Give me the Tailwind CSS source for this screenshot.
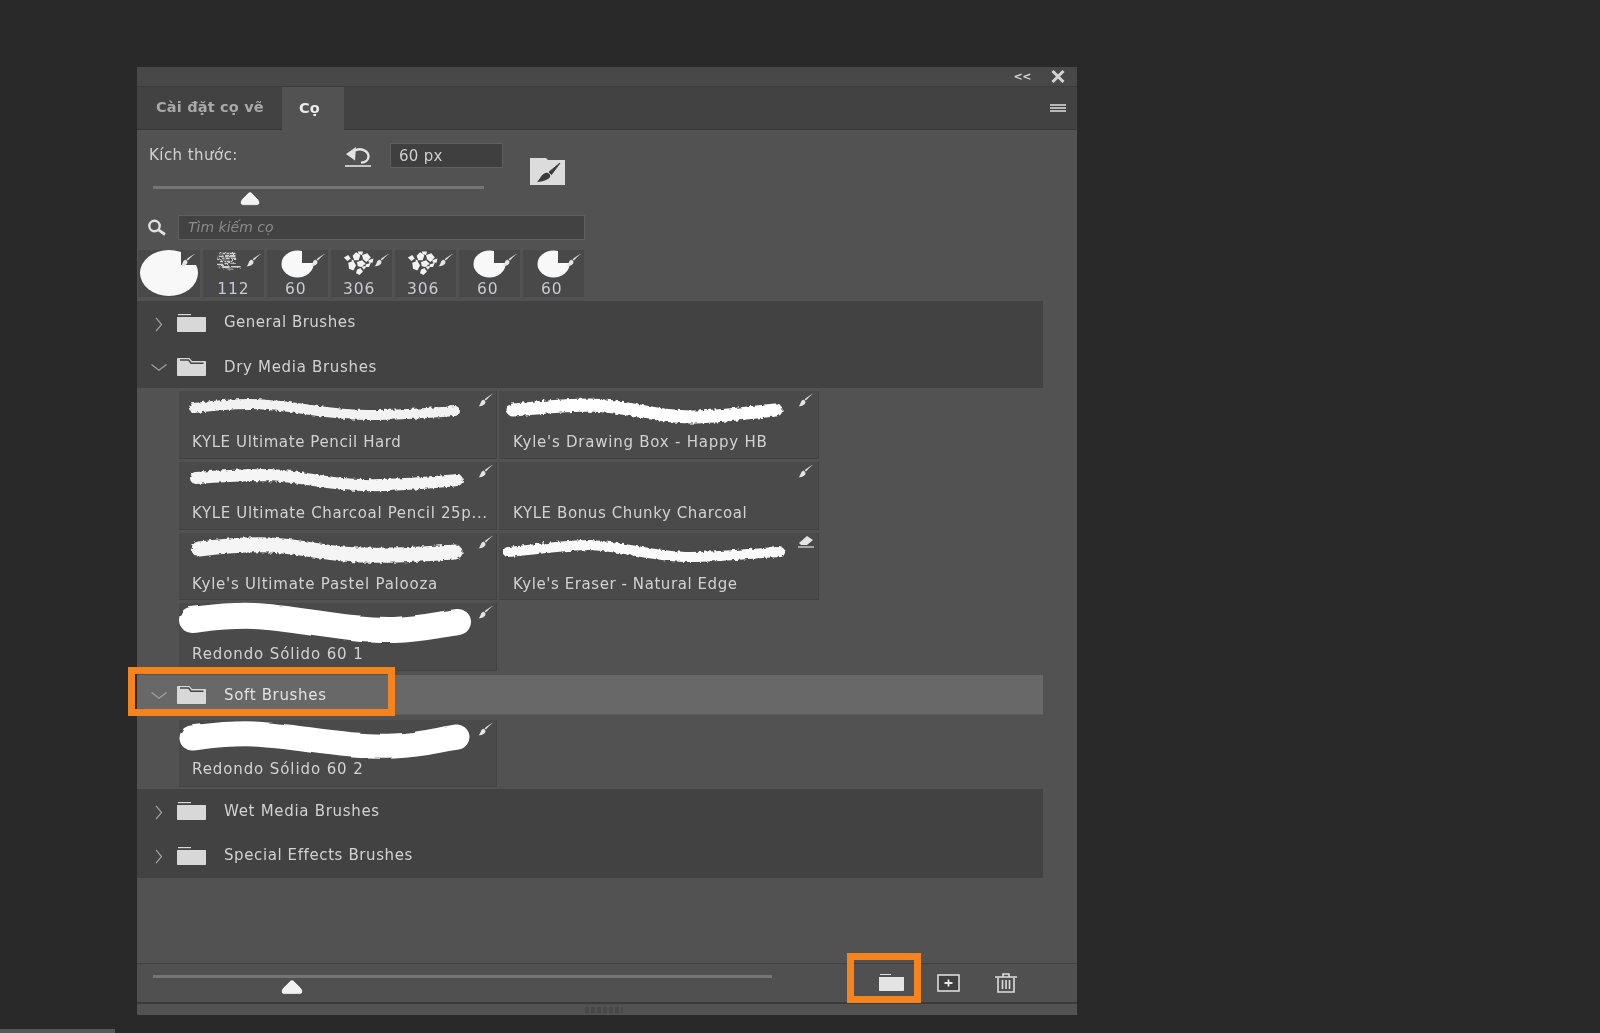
<!DOCTYPE html>
<html lang="vi">
<head>
<meta charset="utf-8">
<title>Cọ</title>
<script src="https://cdn.jsdelivr.net/npm/@tailwindcss/browser@4"></script>
</head>
<body class="bg-[#292929] overflow-hidden">
<svg width="0" height="0" class="absolute">
  <defs>
    <filter id="rough" filterUnits="userSpaceOnUse" x="-20" y="-30" width="360" height="110"><feTurbulence type="fractalNoise" baseFrequency="0.3" numOctaves="2" seed="4"/><feDisplacementMap in="SourceGraphic" scale="4"/></filter>
    <filter id="soft" filterUnits="userSpaceOnUse" x="-20" y="-30" width="360" height="110"><feTurbulence type="fractalNoise" baseFrequency="0.04" numOctaves="2" seed="7"/><feDisplacementMap in="SourceGraphic" scale="3"/></filter>
    <filter id="speck" x="-5%" y="-5%" width="110%" height="110%"><feTurbulence type="fractalNoise" baseFrequency="0.5" numOctaves="2" seed="9"/><feDisplacementMap in="SourceGraphic" scale="4"/></filter>
    <symbol id="brush" viewBox="0 0 17 15"><path d="M16.5 .5C13 3 10.5 5.5 8.5 8L7 6.8C9.5 4.5 13 2 16.5 .5Z" fill="currentColor"/><path d="M6.4 7.4C8.6 8.4 8.4 11 6.6 12.4 4.6 14 2 14.2 .5 14.2 2 13 2.2 11.6 3 9.8 3.6 8.4 5 7 6.4 7.4Z" fill="currentColor"/></symbol>
    <symbol id="folder" viewBox="0 0 29 18"><path d="M1 0H14V1.2H1Z" fill="#d8d8d8"/><path d="M1 3H28.5C28.8 3 29 3.2 29 3.5V17C29 17.6 28.6 18 28 18H1C.4 18 0 17.6 0 17V4C0 3.4 .4 3 1 3Z" fill="#d8d8d8"/></symbol>
    <symbol id="folderopen" viewBox="0 0 29 18"><path d="M1.2 0H12.5L15 3H28C28.6 3 29 3.4 29 4V17C29 17.6 28.6 18 28 18H1C.4 18 0 17.6 0 17V1.2C0 .5 .5 0 1.2 0Z" fill="#d8d8d8"/><path d="M3 2H11.6L14 5.2H26.5" fill="none" stroke="#444" stroke-width="1.5"/></symbol>
    <symbol id="right" viewBox="0 0 8 15"><path d="M1 .8 6.5 7.5 1 14.2" fill="none" stroke="#a2a2a2" stroke-width="1.2"/></symbol>
    <symbol id="down" viewBox="0 0 16 7"><path d="M.5 .6 8 6.2 15.5 .6" fill="none" stroke="#a2a2a2" stroke-width="1.2"/></symbol>
    <symbol id="thumb" viewBox="0 0 20 15" preserveAspectRatio="none"><path d="M10 .8C11 .8 12 2 13.5 3.5L17.5 7.5C19 9 19.6 10.4 19.6 11.6 19.6 13.4 18.6 14.4 17 14.4H3C1.4 14.4 .4 13.4 .4 11.6 .4 10.4 1 9 2.5 7.5L6.5 3.5C8 2 9 .8 10 .8Z" fill="#f2f2f2" stroke="#3e3e3e" stroke-width=".7"/></symbol>
    <symbol id="scatter" viewBox="0 0 46 30"><g fill="#f2f2f2"><path d="M1 7 6 4 9 8 5 11Z"/><path d="M11 5 15 1 20 4 18 10 13 10Z"/><path d="M17 0 23 0 22 4 18 3Z"/><path d="M22 4 28 2 32 7 27 12 23 9Z"/><path d="M29 10 35 8 34 13 30 13Z"/><path d="M6 13 12 11 15 16 12 22 7 20Z"/><path d="M16 12 22 10 26 14 21 18 17 17Z"/><path d="M26 15 32 13 30 18 26 18Z"/><path d="M16 21 20 19 23 23 19 27 15 25Z"/><path d="M10 9 13 11 10 12Z"/><path d="M21 17 27 17 24 21Z"/></g></symbol>
    <symbol id="noise" viewBox="0 0 46 30"><g fill="#cfcfcf" filter="url(#speck)"><path d="M5 1h22v2H5zM3 5h8v2H3zM13 4h14v3H13zM2 9h5v2H2zM9 8h10v2H9zM21 8h7v3H21zM6 12h4v2H6zM12 12h13v2H12zM2 16h8v2H2zM12 15h5v2h-5zM20 15h8v1H20zM4 20h4v1H4zM9 19h10v3H9zM21 19h13v2H21zM16 23h8v1H16z"/></g></symbol>
  </defs>
</svg>

<div class="h-[1033px] flex flex-col pt-[67px] font-['DejaVu_Sans',sans-serif] blur-[0.35px]">
  <div class="relative ml-[137px] w-[940px] h-[948px] shrink-0 flex flex-col bg-[#525252]">
    <!-- title bar -->
    <div class="h-[20px] shrink-0 bg-[#484848] border-b border-[#3b3b3b] flex items-center justify-end">
      <span class="text-[11px] leading-none font-bold text-[#d8d8d8] mr-[20px] tracking-[-0.5px] -mt-[1px]">&lt;&lt;</span>
      <svg class="w-[14px] h-[13px] mr-[12px]" viewBox="0 0 14 13"><path d="M1.5 1 12.5 12M12.5 1 1.5 12" stroke="#d4d4d4" stroke-width="3"/></svg>
    </div>
    <!-- tabs -->
    <div class="h-[43px] shrink-0 bg-[#424242] flex items-stretch">
      <div class="w-[145px] flex items-center pl-[19px] border-b border-[#383838] text-[14.5px] font-bold text-[#a9a9a9] tracking-[0.18px]">Cài đặt cọ vẽ</div>
      <div class="w-[62px] bg-[#525252] flex items-center pl-[17px] text-[14.5px] font-bold text-[#ececec]">Cọ</div>
      <div class="flex-1 border-b border-[#383838] flex items-center justify-end pr-[11px]">
        <div class="w-[16px] h-[8px] flex flex-col justify-between">
          <div class="h-[2px] bg-[#b8b8b8]"></div><div class="h-[2px] bg-[#b8b8b8]"></div><div class="h-[2px] bg-[#b8b8b8]"></div>
        </div>
      </div>
    </div>
    <!-- content -->
    <div class="flex-1 flex flex-col min-h-0">
      <div class="flex items-start pt-[13px] pl-[12px] h-[56px] shrink-0">
        <div class="w-[196px] text-[15px] leading-[18px] text-[#d2d2d2] mt-[3px] tracking-[0.45px]">Kích thước:</div>
        <svg class="w-[26px] h-[21px] mt-[3px] mr-[19px]" viewBox="0 0 26 21"><path d="M10 4.5C13 3.2 16 3 18 3.8 21.5 5 23.5 7.5 23.5 10.5 23.5 14 20.5 16.4 16 16.6" fill="none" stroke="#e4e4e4" stroke-width="2.4"/><path d="M1 8 11 1 10 14.5Z" fill="#e4e4e4"/><path d="M0 20H26" stroke="#e4e4e4" stroke-width="1.6"/></svg>
        <div class="w-[113px] h-[25px] bg-[#3f3f3f] border border-[#5f5f5f] flex items-center pl-[8px] pt-[2px] text-[15px] tracking-[0.3px] text-[#cfcfcf]">60 px</div>
        <svg class="w-[35px] h-[27px] ml-[27px] mt-[15px]" viewBox="0 0 35 27"><path d="M0 0H16L18 2H35V27H0Z" fill="#dcdcdc"/><path d="M30 5 19 14 21.5 16.5 30 5Z" fill="#3c3c3c" stroke="#3c3c3c"/><path d="M18 15C21 16 21 19.5 18 21 15 23 10 24 7 24 9 22 10 20 11.5 18 13 15.5 16 14 18 15Z" fill="#3c3c3c"/></svg>
      </div>
      <div class="ml-[16px] w-[331px] h-[3px] bg-[#757575] shrink-0"></div>
      <svg class="ml-[103px] mt-[2px] w-[20px] h-[15px] shrink-0"><use href="#thumb"/></svg>
      <div class="flex items-center mt-[9px] h-[25px] shrink-0">
        <svg class="ml-[10px] w-[20px] h-[17px]" viewBox="0 0 20 17"><circle cx="7.5" cy="7" r="5.2" fill="none" stroke="#e2e2e2" stroke-width="2.4"/><path d="M11.5 10.8 18 15.5" stroke="#e2e2e2" stroke-width="2.8"/></svg>
        <div class="ml-[11px] w-[407px] h-[25px] bg-[#424242] border border-[#5f5f5f] flex items-center pl-[9px] text-[14px] italic text-[#8b8b8b]">Tìm kiếm cọ</div>
      </div>
      <!-- presets -->
      <div class="flex gap-[3px] mt-[10px] ml-[1px] h-[47px] shrink-0">
        <div class="relative w-[62px] bg-[#494949] overflow-hidden">
          <svg class="absolute left-[2px] top-0 w-[60px] h-[47px]" viewBox="0 0 60 47"><ellipse cx="29" cy="23" rx="29" ry="23" fill="#f8f8f8"/><path d="M41 -1H60V15H41Z" fill="#494949"/></svg>
          <svg class="absolute right-[4px] top-[3px] w-[16px] h-[14px] text-[#e4e4e4]"><use href="#brush"/></svg>
        </div>
        <div class="relative w-[61px] bg-[#494949] flex items-end justify-center">
          <svg class="absolute left-[12px] top-[2px] w-[35px] h-[22px]"><use href="#noise"/></svg>
          <svg class="absolute right-[2px] top-[3px] w-[16px] h-[14px] text-[#e4e4e4]"><use href="#brush"/></svg>
          <span class="text-[15.5px] leading-[17px] tracking-[0.9px] text-[#c6ccd2] -mb-[1px]">112</span>
        </div>
        <div class="relative w-[61px] bg-[#494949] flex items-end pl-[18px]">
          <svg class="absolute left-[14px] top-0 w-[33px] h-[28px]" viewBox="0 0 33 28"><ellipse cx="16.5" cy="14" rx="16" ry="13.5" fill="#f8f8f8"/><path d="M21 -1H34V13H21Z" fill="#494949"/></svg>
          <svg class="absolute right-[2px] top-[3px] w-[16px] h-[14px] text-[#e4e4e4]"><use href="#brush"/></svg>
          <span class="text-[15.5px] leading-[17px] tracking-[0.9px] text-[#c6ccd2] -mb-[1px]">60</span>
        </div>
        <div class="relative w-[61px] bg-[#494949] flex items-end pl-[12px]">
          <svg class="absolute left-[12px] top-[1px] w-[40px] h-[27px]"><use href="#scatter"/></svg>
          <svg class="absolute right-[2px] top-[3px] w-[16px] h-[14px] text-[#e4e4e4]"><use href="#brush"/></svg>
          <span class="text-[15.5px] leading-[17px] tracking-[0.9px] text-[#c6ccd2] -mb-[1px]">306</span>
        </div>
        <div class="relative w-[61px] bg-[#494949] flex items-end pl-[12px]">
          <svg class="absolute left-[12px] top-[1px] w-[40px] h-[27px]"><use href="#scatter"/></svg>
          <svg class="absolute right-[2px] top-[3px] w-[16px] h-[14px] text-[#e4e4e4]"><use href="#brush"/></svg>
          <span class="text-[15.5px] leading-[17px] tracking-[0.9px] text-[#c6ccd2] -mb-[1px]">306</span>
        </div>
        <div class="relative w-[61px] bg-[#494949] flex items-end pl-[18px]">
          <svg class="absolute left-[14px] top-0 w-[33px] h-[28px]" viewBox="0 0 33 28"><ellipse cx="16.5" cy="14" rx="16" ry="13.5" fill="#f8f8f8"/><path d="M21 -1H34V13H21Z" fill="#494949"/></svg>
          <svg class="absolute right-[2px] top-[3px] w-[16px] h-[14px] text-[#e4e4e4]"><use href="#brush"/></svg>
          <span class="text-[15.5px] leading-[17px] tracking-[0.9px] text-[#c6ccd2] -mb-[1px]">60</span>
        </div>
        <div class="relative w-[61px] bg-[#494949] flex items-end pl-[18px]">
          <svg class="absolute left-[14px] top-0 w-[33px] h-[28px]" viewBox="0 0 33 28"><ellipse cx="16.5" cy="14" rx="16" ry="13.5" fill="#f8f8f8"/><path d="M21 -1H34V13H21Z" fill="#494949"/></svg>
          <svg class="absolute right-[2px] top-[3px] w-[16px] h-[14px] text-[#e4e4e4]"><use href="#brush"/></svg>
          <span class="text-[15.5px] leading-[17px] tracking-[0.9px] text-[#c6ccd2] -mb-[1px]">60</span>
        </div>
      </div>
      <!-- list -->
      <div class="w-[906px] mt-[4px] text-[15px] tracking-[0.65px] text-[#d2d2d2]">
        <div class="h-[44px] bg-[#424242] flex items-center">
          <svg class="ml-[18px] w-[8px] h-[15px] mt-[2px]"><use href="#right"/></svg>
          <svg class="ml-[14px] w-[29px] h-[18px]"><use href="#folder"/></svg>
          <span class="ml-[18px] -mt-[1px] tracking-[0.5px]">General Brushes</span>
        </div>
        <div class="h-[43px] bg-[#424242] flex items-center">
          <svg class="ml-[14px] w-[16px] h-[7px] mt-[2px]"><use href="#down"/></svg>
          <svg class="ml-[10px] w-[29px] h-[18px]"><use href="#folderopen"/></svg>
          <span class="ml-[18px] mt-[1px] tracking-[0.68px]">Dry Media Brushes</span>
        </div>
        <div class="grid grid-cols-[318px_320px] gap-x-[2px] gap-y-[3px] pl-[42px] pt-[3px] pb-[4px]">
          <div class="relative h-[68px] bg-[#4a4a4a] border-r border-b border-[#424242]">
            <svg class="absolute left-0 top-0 w-[318px] h-[40px] overflow-visible" viewBox="0 0 318 40"><path d="M15 17C40 14 70 12 90 14 130 17 150 24 190 24 220 24 250 22 276 20" fill="none" stroke="#f2f2f2" stroke-width="10" stroke-linecap="round" filter="url(#rough)"/></svg>
            <svg class="absolute left-[299px] top-[2px] w-[16px] h-[14px] text-[#e4e4e4]"><use href="#brush"/></svg>
            <div class="absolute left-[13px] bottom-[6px] leading-[20px] tracking-[0.6px]">KYLE Ultimate Pencil Hard</div>
          </div>
          <div class="relative h-[68px] bg-[#4a4a4a] border-r border-b border-[#424242]">
            <svg class="absolute left-0 top-0 w-[320px] h-[40px] overflow-visible" viewBox="0 0 320 40"><path d="M14 19C40 17 65 14 91 14 130 15 155 26 191 26 225 26 250 21 277 19" fill="none" stroke="#fff" stroke-width="13" stroke-linecap="round" filter="url(#rough)"/></svg>
            <svg class="absolute left-[299px] top-[2px] w-[16px] h-[14px] text-[#e4e4e4]"><use href="#brush"/></svg>
            <div class="absolute left-[14px] bottom-[6px] leading-[20px] tracking-[0.76px]">Kyle's Drawing Box - Happy HB</div>
          </div>
          <div class="relative h-[68px] bg-[#4a4a4a] border-r border-b border-[#424242]">
            <svg class="absolute left-0 top-0 w-[318px] h-[40px] overflow-visible" viewBox="0 0 318 40"><path d="M17 16C45 14 70 13 91 13 130 15 150 23 184 23 220 24 255 20 278 18" fill="none" stroke="#f5f5f5" stroke-width="12" stroke-linecap="round" filter="url(#rough)"/></svg>
            <svg class="absolute left-[299px] top-[2px] w-[16px] h-[14px] text-[#e4e4e4]"><use href="#brush"/></svg>
            <div class="absolute left-[13px] bottom-[6px] leading-[20px] whitespace-nowrap tracking-[0.66px]">KYLE Ultimate Charcoal Pencil 25p...</div>
          </div>
          <div class="relative h-[68px] bg-[#4a4a4a] border-r border-b border-[#424242]">
            <svg class="absolute left-[299px] top-[2px] w-[16px] h-[14px] text-[#e4e4e4]"><use href="#brush"/></svg>
            <div class="absolute left-[14px] bottom-[6px] leading-[20px] tracking-[0.6px]">KYLE Bonus Chunky Charcoal</div>
          </div>
          <div class="relative h-[67px] bg-[#4a4a4a] border-r border-b border-[#424242]">
            <svg class="absolute left-0 top-0 w-[318px] h-[40px] overflow-visible" viewBox="0 0 318 40"><path d="M20 16C45 13 70 11 91 12 130 14 150 22 184 22 220 23 255 20 276 19" fill="none" stroke="#f5f5f5" stroke-width="15" stroke-linecap="round" filter="url(#rough)"/></svg>
            <svg class="absolute left-[299px] top-[2px] w-[16px] h-[14px] text-[#e4e4e4]"><use href="#brush"/></svg>
            <div class="absolute left-[13px] bottom-[5px] leading-[20px] tracking-[0.76px]">Kyle's Ultimate Pastel Palooza</div>
          </div>
          <div class="relative h-[67px] bg-[#4a4a4a] border-r border-b border-[#424242]">
            <svg class="absolute left-0 top-0 w-[320px] h-[40px] overflow-visible" viewBox="0 0 320 40"><path d="M9 19C35 17 65 12 91 12 130 14 155 24 191 24 225 24 255 20 281 19" fill="none" stroke="#fafafa" stroke-width="10" stroke-linecap="round" filter="url(#rough)"/></svg>
            <svg class="absolute left-[299px] top-[2px] w-[16px] h-[13px]" viewBox="0 0 16 13"><path d="M1 8 9 1 15 5 9 10H3Z" fill="#e4e4e4"/><path d="M0 12H16" stroke="#e4e4e4" stroke-width="1.2"/></svg>
            <div class="absolute left-[14px] bottom-[5px] leading-[20px] tracking-[0.57px]">Kyle's Eraser - Natural Edge</div>
          </div>
          <div class="relative h-[68px] bg-[#4a4a4a] border-r border-b border-[#424242]">
            <svg class="absolute left-0 top-0 w-[318px] h-[42px] overflow-visible" viewBox="0 0 318 42"><path d="M13 17C30 15 50 12 75 13 120 15 165 28 215 27 245 26 262 21 279 19" fill="none" stroke="#fff" stroke-width="26" stroke-linecap="round" filter="url(#soft)"/></svg>
            <svg class="absolute left-[299px] top-[2px] w-[16px] h-[14px] text-[#e4e4e4]"><use href="#brush"/></svg>
            <div class="absolute left-[13px] bottom-[6px] leading-[20px] tracking-[0.9px]">Redondo Sólido 60 1</div>
          </div>
        </div>
        <div class="h-[40px] bg-[#686868] flex items-center border-b border-[#5c5c5c]">
          <svg class="ml-[14px] w-[16px] h-[7px] mt-[2px]"><use href="#down"/></svg>
          <svg class="ml-[10px] w-[29px] h-[18px]"><use href="#folderopen"/></svg>
          <span class="ml-[18px] mt-[1px] text-[#e2e2e2] tracking-[0.66px]">Soft Brushes</span>
        </div>
        <div class="pl-[42px] pt-[5px] pb-[2px]">
          <div class="relative w-[318px] h-[67px] bg-[#4a4a4a] border-r border-b border-[#424242]">
            <svg class="absolute left-0 top-0 w-[318px] h-[42px] overflow-visible" viewBox="0 0 318 42"><path d="M13 18C30 16 50 13 75 14 120 16 165 28 215 26 245 25 262 19 278 17" fill="none" stroke="#fff" stroke-width="25" stroke-linecap="round" filter="url(#soft)"/></svg>
            <svg class="absolute left-[299px] top-[2px] w-[16px] h-[14px] text-[#e4e4e4]"><use href="#brush"/></svg>
            <div class="absolute left-[13px] bottom-[7px] leading-[20px] tracking-[0.9px]">Redondo Sólido 60 2</div>
          </div>
        </div>
        <div class="h-[44px] bg-[#424242] flex items-center">
          <svg class="ml-[18px] w-[8px] h-[15px] mt-[2px]"><use href="#right"/></svg>
          <svg class="ml-[14px] w-[29px] h-[18px]"><use href="#folder"/></svg>
          <span class="ml-[18px] tracking-[0.7px]">Wet Media Brushes</span>
        </div>
        <div class="h-[45px] bg-[#424242] flex items-center">
          <svg class="ml-[18px] w-[8px] h-[15px] mt-[2px]"><use href="#right"/></svg>
          <svg class="ml-[14px] w-[29px] h-[18px]"><use href="#folder"/></svg>
          <span class="ml-[18px] tracking-[0.6px]">Special Effects Brushes</span>
        </div>
      </div>
    </div>
    <!-- bottom bar -->
    <div class="h-[39px] shrink-0 border-t border-[#414141] bg-[#505050] relative flex">
      <div class="w-[640px]">
        <div class="ml-[16px] mt-[11px] w-[619px] h-[3px] bg-[#757575]"></div>
        <svg class="ml-[144px] mt-[1px] w-[22px] h-[16px]"><use href="#thumb"/></svg>
      </div>
      <div class="flex items-start pt-[10px] ml-[102px]">
        <svg class="w-[25px] h-[17px]" viewBox="0 0 25 17"><path d="M1 0H12V1H1Z" fill="#e0e0e0"/><path d="M0 3H25V16C25 16.6 24.6 17 24 17H1C.4 17 0 16.6 0 16Z" fill="#e4e4e4"/></svg>
        <svg class="ml-[33px] w-[23px] h-[18px]" viewBox="0 0 23 18"><rect x="1" y="1" width="21" height="16" fill="#3f3f3f" stroke="#dcdcdc" stroke-width="1.6"/><path d="M7.5 9H15.5M11.5 5.5V12.5" stroke="#e8e8e8" stroke-width="1.8"/></svg>
        <svg class="ml-[35px] w-[22px] h-[20px] -mt-[1px]" viewBox="0 0 22 20"><path d="M0 4H22M8 3.5V1H14V3.5" fill="none" stroke="#dcdcdc" stroke-width="1.6"/><path d="M3 4.5V19H19V4.5" fill="none" stroke="#dcdcdc" stroke-width="1.6"/><path d="M7.5 7V16M11 7V16M14.5 7V16" stroke="#dcdcdc" stroke-width="1.6"/></svg>
      </div>
    </div>
    <div class="h-[2px] bg-[#3a3a3a] shrink-0"></div>
    <div class="h-[11px] shrink-0 bg-[#525252] flex items-center justify-center pr-[6px]">
      <div class="w-[38px] h-[6px] bg-[repeating-linear-gradient(90deg,#484848_0,#484848_4px,#525252_4px,#525252_6px)]"></div>
    </div>
    <!-- annotations -->
    <div class="absolute left-[-9px] top-[600px] w-[267px] h-[49px] border-[7px] border-[#f5841f]"></div>
    <div class="absolute left-[710px] top-[886px] w-[74px] h-[50px] border-[7px] border-[#f5841f]"></div>
  </div>
  <div class="mt-[14px] w-[115px] h-[4px] bg-[#585858] shrink-0"></div>
</div>
</body>
</html>
